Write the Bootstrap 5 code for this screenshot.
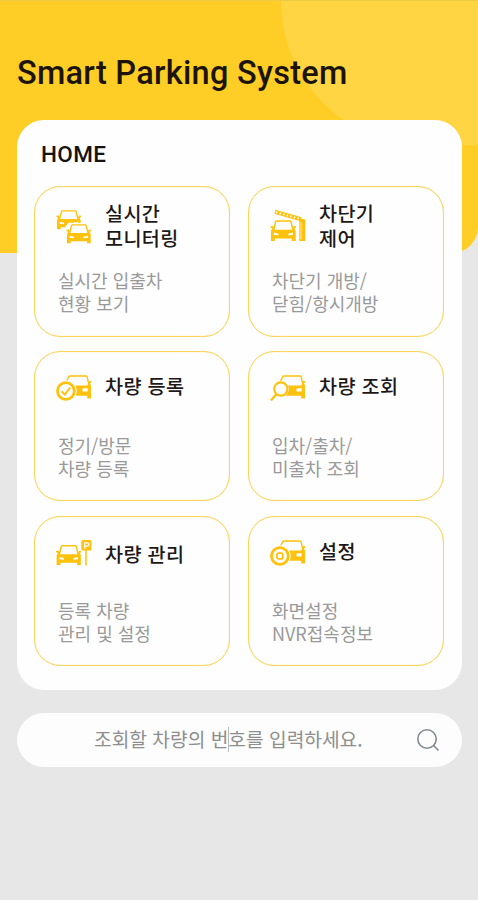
<!DOCTYPE html>
<html lang="ko">
<head>
<meta charset="utf-8">
<meta name="viewport" content="width=device-width, initial-scale=1">
<title>Smart Parking System</title>
<link href="https://cdn.jsdelivr.net/npm/bootstrap@5.3.0/dist/css/bootstrap.min.css" rel="stylesheet">
<style>
  body { background: #e7e7e7; font-family: "Noto Sans CJK KR", sans-serif; }
  .app { height: 900px; padding: 0 16px 0 17px; }
  .backdrop { height: 253px; background: #ffce26; border-bottom-right-radius: 26px; border-top: 1px solid #efca44; z-index: 0; }
  .backdrop-curve { width: 197px; height: 144px; background: #ffd544; border-bottom-left-radius: 145px; }
  .app-title { font: 500 32.5px/40px Roboto, sans-serif; letter-spacing: .28px; color: #1c1408; padding-top: 53px; height: 120px; }
  .panel { height: 570px; border-radius: 27px; padding: 19px 18px 0 17px; background: #fefefe; }
  .panel-title { font: 500 22.5px/30px Roboto, sans-serif; letter-spacing: .4px; color: #171310; padding-left: 7px; height: 47px; }
  .tiles { display: grid; grid-template-columns: 196px 196px; grid-auto-rows: 150.5px; gap: 14.3px 18px; }
  .tile { border: 1px solid #fbd45c; box-shadow: inset 0 0 1px #fbd45c; border-radius: 26px; padding: 0 0 0 21px; background: #fefefe; color: inherit; }
  .tile-head { height: 82px; gap: 13px; padding-top: 14px; }
  .tile-head svg { width: 36px; height: 36px; margin-top: 8px; color: #fec10d; flex: none; }
  .tile-name { font-size: 19.6px; line-height: 24.5px; font-weight: 500; letter-spacing: .35px; color: #1d1816; }
  .one-line { padding-top: 8.5px; }
  .one-line-low { padding-top: 11.5px; }
  .tile-desc { font-size: 18px; line-height: 23px; font-weight: 400; color: #999; padding-left: 2px; }
  .search { height: 54px; margin-top: 23px; border-radius: 27px; background: #fdfdfd; padding: 0 21px 2px 77px; }
  .search-text { font-size: 19.2px; font-weight: 400; color: #8e8e8e; }
  .caret { width: 1px; height: 25px; background: #bbb; left: 211px; top: 14px; }
</style>
<script src="https://cdn.jsdelivr.net/npm/bootstrap@5.3.0/dist/js/bootstrap.bundle.min.js"></script>
</head>
<body>
<svg class="d-none" xmlns="http://www.w3.org/2000/svg">
  <!-- front view of a car, 25 x 20 -->
  <symbol id="car" viewBox="0 0 25 20" preserveAspectRatio="none">
    <path d="M3.2 9.5 5.2 1.7Q5.4 .9 6.2 .9H18.8Q19.6 .9 19.8 1.7L21.8 9.5" fill="none" stroke="currentColor" stroke-width="1.4"/>
    <path fill="currentColor" fill-rule="evenodd" d="M0 6 2.6 5.7 3.8 9.2H21.2L22.4 5.7 25 6V7.2L23.1 7.9 24.4 10.4V20H20.6V17.6H4.4V20H.6V10.4L1.9 7.9 0 7.2ZM3.4 12V14.2L7.8 14.6V13ZM21.6 12V14.2L17.2 14.6V13Z"/>
  </symbol>
  <!-- three-quarter car whose left wheel area holds another mark -->
  <symbol id="carside" viewBox="0 0 36 28">
    <path d="M9.3 8.5 12.8 1.7Q13.2 1 14 1H30Q30.8 1 31.1 1.8L33 10" fill="none" stroke="currentColor" stroke-width="1.4"/>
    <path fill="currentColor" fill-rule="evenodd" d="M13 10.6H31.4L33 6 35.4 6.2V7.6L33.9 8.2 35 10.6V23.5H31.2V20.8H13ZM26.5 13.6V16.6H31.6V12.9Z"/>
  </symbol>
</svg>

<div class="backdrop position-absolute top-0 start-0 w-100 overflow-hidden">
  <div class="backdrop-curve ms-auto"></div>
</div>

<main class="app position-relative overflow-hidden">
  <h1 class="app-title mb-0">Smart Parking System</h1>

  <section class="panel">
    <h2 class="panel-title mb-0">HOME</h2>
    <div class="tiles">
      <a class="tile text-decoration-none" href="#">
        <div class="tile-head d-flex">
          <svg viewBox="0 0 36 36"><use href="#car" x="0.3" y="1" width="25" height="19.5"/><path d="M6.5 36V21H9.5V17.5L12.5 13.8H36V36Z" fill="#fefefe"/><use href="#car" x="10.3" y="15" width="25" height="19.5"/></svg>
          <div class="tile-name">실시간<br>모니터링</div>
        </div>
        <div class="tile-desc">실시간 입출차<br>현황 보기</div>
      </a>
      <a class="tile text-decoration-none" href="#">
        <div class="tile-head d-flex">
          <svg viewBox="0 0 36 36"><path d="M5 2.8 31 10.2" stroke="currentColor" stroke-width="4.2"/><path d="M6 3.1 29 9.6" stroke="#fefefe" stroke-width="1.8" stroke-dasharray="1.5 2.2"/><use href="#car" x="0.3" y="11" width="26" height="21"/><path d="M29.3 9.5 35.3 10.5V32H29.3Z" fill="currentColor"/><path d="M31 13V30.5" stroke="#fefefe" stroke-width=".7"/></svg>
          <div class="tile-name">차단기<br>제어</div>
        </div>
        <div class="tile-desc">차단기 개방/<br>닫힘/항시개방</div>
      </a>
      <a class="tile text-decoration-none" href="#">
        <div class="tile-head d-flex">
          <svg viewBox="0 0 36 36"><use href="#carside" x="0" y="1" width="36" height="28"/><circle cx="9.9" cy="17" r="10.8" fill="#fefefe"/><circle cx="9.9" cy="17" r="8.4" fill="none" stroke="currentColor" stroke-width="2.8"/><path d="M5.5 17.3 8.8 20.5 14.3 13.5" fill="none" stroke="currentColor" stroke-width="1.9"/></svg>
          <div class="tile-name one-line">차량 등록</div>
        </div>
        <div class="tile-desc">정기/방문<br>차량 등록</div>
      </a>
      <a class="tile text-decoration-none" href="#">
        <div class="tile-head d-flex">
          <svg viewBox="0 0 36 36"><use href="#carside" x="0" y="1" width="36" height="28"/><circle cx="10.8" cy="15" r="8" fill="#fefefe"/><circle cx="10.8" cy="15" r="6.6" fill="none" stroke="currentColor" stroke-width="2.1"/><path d="M6.5 20 .9 26.4" stroke="currentColor" stroke-width="2.3"/></svg>
          <div class="tile-name one-line">차량 조회</div>
        </div>
        <div class="tile-desc">입차/출차/<br>미출차 조회</div>
      </a>
      <a class="tile text-decoration-none" href="#">
        <div class="tile-head d-flex">
          <svg viewBox="0 0 36 36"><use href="#car" x="0" y="5.8" width="25.5" height="20.5"/><rect x="25.3" y="1" width="10.2" height="10.6" rx="1.5" fill="currentColor"/><path d="M28.7 9.7V3.8H31.2A1.6 1.6 0 0 1 31.2 7.2H28.7" fill="none" stroke="#fefefe" stroke-width="1.3"/><path d="M30 11V26.5" stroke="currentColor" stroke-width="1.5"/></svg>
          <div class="tile-name one-line-low">차량 관리</div>
        </div>
        <div class="tile-desc">등록 차량<br>관리 및 설정</div>
      </a>
      <a class="tile text-decoration-none" href="#">
        <div class="tile-head d-flex">
          <svg viewBox="0 0 36 36"><use href="#carside" x="0" y="1" width="36" height="28"/><circle cx="9.9" cy="17" r="10.8" fill="#fefefe"/><circle cx="9.9" cy="17" r="8.4" fill="none" stroke="currentColor" stroke-width="2.8"/><rect x="7" y="14.1" width="5.8" height="5.8" rx="1.7" fill="none" stroke="currentColor" stroke-width="1.8"/></svg>
          <div class="tile-name one-line">설정</div>
        </div>
        <div class="tile-desc">화면설정<br>NVR접속정보</div>
      </a>
    </div>
  </section>

  <div class="search d-flex align-items-center justify-content-between position-relative">
    <span class="search-text text-nowrap">조회할 차량의 번호를 입력하세요.</span>
    <span class="caret position-absolute"></span>
    <svg width="25" height="25" viewBox="0 0 25 25" fill="none" stroke="#85898e" stroke-width="1.6"><circle cx="11" cy="12" r="9.2"/><path d="M17.5 18.5 22.5 23.5"/></svg>
  </div>
</main>
</body>
</html>
